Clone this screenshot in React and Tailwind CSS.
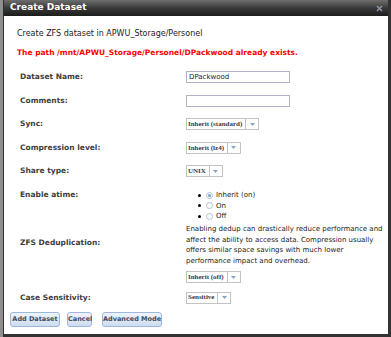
import React from 'react';

// Small Dojo-style select box: text cell + arrow cell
function Select({ label }) {
  return (
    <div className="inline-flex h-[12px] border border-[#c3c3c3] bg-white align-top">
      <div
        className="flex items-center pl-[1px] pr-[3px] text-[7px] font-bold text-[#3a3a4a] whitespace-nowrap"
        style={{ fontFamily: "'Liberation Serif', serif" }}
      >
        {label}
      </div>
      <div className="w-[13px] border-l border-[#c3c3c3] bg-white flex items-center justify-center">
        <svg width="5" height="3" viewBox="0 0 5 3">
          <path d="M0 0 L5 0 L2.5 3 Z" fill="#8aa3c4" />
        </svg>
      </div>
    </div>
  );
}

function Radio({ checked, label }) {
  return (
    <li className="flex items-center h-[10.5px]">
      <span className="w-[3px] h-[3px] bg-black rounded-full mr-[5px]" />
      <span className="w-[7px] h-[7px] rounded-full border border-[#a9c3dc] bg-white flex items-center justify-center mr-[3px]">
        {checked && <span className="w-[3px] h-[3px] rounded-full bg-[#7d9ec7]" />}
      </span>
      <span>{label}</span>
    </li>
  );
}

const labelCls = 'w-[169px] shrink-0 pl-[3px] font-bold text-[7.5px] leading-[10px] text-[#3d3d3d]';

function Row({ label, h = 'h-[23.5px]', children }) {
  return (
    <div className={`flex items-center ${h}`}>
      <div className={labelCls}>{label}</div>
      <div className="flex-1">{children}</div>
    </div>
  );
}

function Button({ children, w }) {
  return (
    <button className={`h-[15px] ${w} whitespace-nowrap rounded-[3px] border border-[#9db8dc] bg-gradient-to-b from-[#eef4fb] to-[#cddcf0] text-[6.5px] font-bold text-[#3f4c5c]`}>
      {children}
    </button>
  );
}

export default function App() {
  return (
    <div
      className="w-[391px] h-[337px] flex bg-[#8f8f8f] overflow-hidden text-[7px] text-[#222]"
      style={{ fontFamily: "Tahoma, 'DejaVu Sans', sans-serif" }}
    >
      <div className="w-[3px] shrink-0" />
      <div className="flex-1 flex flex-col border-l border-[#2e2e2e] border-r-[3px] border-r-[#333] border-b-[3px] border-b-[#333] bg-white">
        {/* Title bar */}
        <div className="h-[16px] shrink-0 flex items-center justify-between pl-[6px] pr-[5px] bg-gradient-to-b from-[#6e6e6e] via-[#3a3a3a] to-[#1c1c1c]">
          <span className="text-white font-bold text-[9px]">Create Dataset</span>
          <svg width="7" height="7" viewBox="0 0 7 7">
            <path d="M1 1 L6 6 M6 1 L1 6" stroke="#8a95a3" strokeWidth="1.6" />
          </svg>
        </div>

        {/* Body */}
        <div className="flex-1 flex flex-col pl-[13px] pt-[13px]">
          <p className="leading-[10px] text-[8px]">Create ZFS dataset in APWU_Storage/Personel</p>
          <p className="mt-[9px] leading-[10px] font-bold text-[#ff0000] text-[7.5px]">
            The path /mnt/APWU_Storage/Personel/DPackwood already exists.
          </p>

          <div className="mt-[7.5px]">
            <Row label="Dataset Name:">
              <input
                defaultValue="DPackwood"
                className="w-[104px] h-[12px] border border-[#b3b0c8] px-[2px] text-[7px] text-[#222] outline-none"
              />
            </Row>
            <Row label="Comments:">
              <input className="w-[104px] h-[12px] border border-[#b3b0c8] outline-none" />
            </Row>
            <Row label="Sync:">
              <Select label="Inherit (standard)" />
            </Row>
            <Row label="Compression level:">
              <Select label="Inherit (lz4)" />
            </Row>
            <Row label="Share type:">
              <Select label="UNIX" />
            </Row>

            <div className="flex h-[39px]">
              <div className={`${labelCls} pt-[7px]`}>Enable atime:</div>
              <ul className="pl-[12px] pt-[7px] leading-[10px]">
                <Radio checked label="Inherit (on)" />
                <Radio label="On" />
                <Radio label="Off" />
              </ul>
            </div>

            <div className="flex items-center pt-[2px]">
              <div className={`${labelCls} pb-[4px]`}>ZFS Deduplication:</div>
              <p className="flex-1 pr-[4px] leading-[10.5px]">
                Enabling dedup can drastically reduce performance and affect the ability to access data. Compression usually offers similar space savings with much lower performance impact and overhead.
              </p>
            </div>
            <div className="flex mt-[5px]">
              <div className="w-[169px] shrink-0" />
              <Select label="Inherit (off)" />
            </div>

            <Row label="Case Sensitivity:" h="h-[29px]">
              <Select label="Sensitive" />
            </Row>
          </div>

          <div className="flex items-center -ml-[7px]">
            <Button w="w-[50px]">Add Dataset</Button>
            <div className="w-[7px]" />
            <Button w="w-[25px]">Cancel</Button>
            <div className="w-[10px]" />
            <Button w="w-[60px]">Advanced Mode</Button>
          </div>
        </div>
      </div>
    </div>
  );
}
